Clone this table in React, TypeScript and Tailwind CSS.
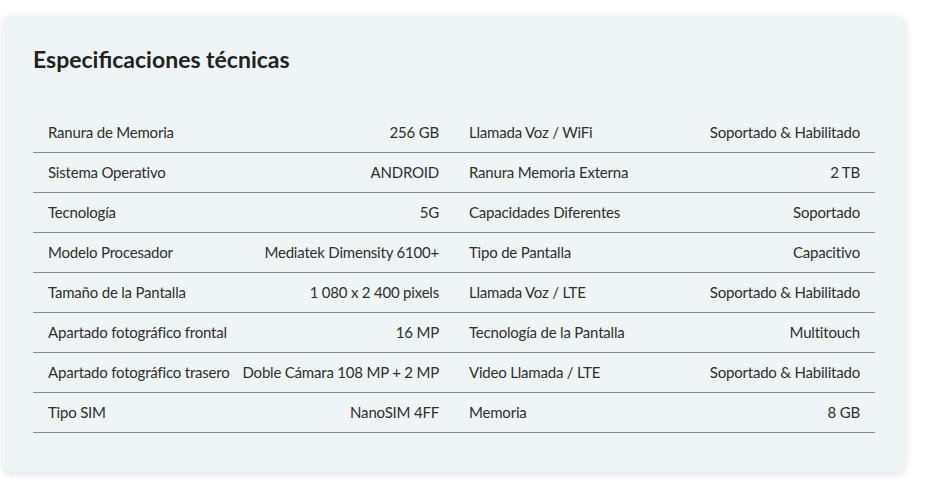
import React from "react";

const rows: [string, string, string, string][] = [
  ["Ranura de Memoria", "256 GB", "Llamada Voz / WiFi", "Soportado & Habilitado"],
  ["Sistema Operativo", "ANDROID", "Ranura Memoria Externa", "2 TB"],
  ["Tecnología", "5G", "Capacidades Diferentes", "Soportado"],
  ["Modelo Procesador", "Mediatek Dimensity 6100+", "Tipo de Pantalla", "Capacitivo"],
  ["Tamaño de la Pantalla", "1 080 x 2 400 pixels", "Llamada Voz / LTE", "Soportado & Habilitado"],
  ["Apartado fotográfico frontal", "16 MP", "Tecnología de la Pantalla", "Multitouch"],
  ["Apartado fotográfico trasero", "Doble Cámara 108 MP + 2 MP", "Video Llamada / LTE", "Soportado & Habilitado"],
  ["Tipo SIM", "NanoSIM 4FF", "Memoria", "8 GB"],
];

function Cell({ label, value }: { label: string; value: string }) {
  return (
    <div className="flex h-[40px] items-center justify-between border-b border-[#8a8a8a] px-[15px] text-[15px] tracking-[-0.2px] text-[#2f2f2f]">
      <span>{label}</span>
      <span>{value}</span>
    </div>
  );
}

export default function App() {
  return (
    <div className="min-h-[489px] bg-white pl-[3px] pt-[16px]" style={{ fontFamily: "Lato, 'Liberation Sans', sans-serif" }}>
      <div className="h-[456px] w-[902px] rounded-lg bg-[#eff4f7] pl-[30px] pt-[29px] shadow-[0_2px_8px_rgba(0,0,0,0.12)]">
        <h2 className="text-[23px] font-bold leading-[28px] text-[#222]">Especificaciones técnicas</h2>
        <div className="mt-[40px] grid w-[842px] grid-cols-2">
          {rows.map((r, i) => (
            <React.Fragment key={i}>
              <Cell label={r[0]} value={r[1]} />
              <Cell label={r[2]} value={r[3]} />
            </React.Fragment>
          ))}
        </div>
      </div>
    </div>
  );
}
